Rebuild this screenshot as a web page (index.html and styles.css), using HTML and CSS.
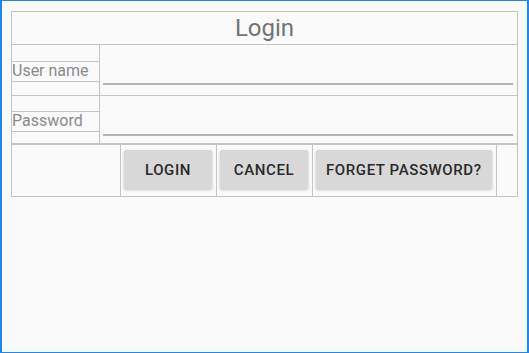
FILE: index.html
```html
<!DOCTYPE html>
<html lang="en">
<head>
  <meta charset="UTF-8">
  <meta name="viewport" content="width=device-width, initial-scale=1.0">
  <title>Login</title>
  <link rel="stylesheet" href="styles.css">
</head>
<body>
  <div class="login">
    <div class="login-title">Login</div>

    <div class="field">
      <div class="label-col">
        <div class="gap gap-top"></div>
        <div class="label">User name</div>
        <div class="gap gap-bottom"></div>
      </div>
      <div class="input-col">
        <input type="text" class="text-input">
      </div>
    </div>

    <div class="field field-last">
      <div class="label-col">
        <div class="gap gap-top"></div>
        <div class="label">Password</div>
        <div class="gap gap-bottom"></div>
      </div>
      <div class="input-col">
        <input type="password" class="text-input">
      </div>
    </div>

    <div class="actions">
      <div class="cell cell-spacer"></div>
      <div class="cell"><button class="btn">Login</button></div>
      <div class="cell"><button class="btn">Cancel</button></div>
      <div class="cell"><button class="btn">Forget password?</button></div>
      <div class="cell cell-end"></div>
    </div>
  </div>
</body>
</html>
```

FILE: styles.css
```css
html {
  box-sizing: border-box;
  height: 100%;
}
*, *::before, *::after {
  box-sizing: inherit;
}
body {
  margin: 0;
  height: 100%;
  background: #fafafa;
  border-style: solid;
  border-color: #1a88f4;
  border-width: 1px 2px 1px 2px;
  padding: 10px 9px 0 9px;
  font-family: Roboto, "Liberation Sans", sans-serif;
}
.login {
  border: 1px solid #c4c4c4;
}
.login-title {
  height: 33px;
  line-height: 32px;
  border-bottom: 1px solid #c4c4c4;
  text-align: center;
  font-size: 24px;
  color: #737373;
}
.field {
  display: flex;
  border-bottom: 1px solid #c4c4c4;
}
.field-last {
  border-bottom: 2px solid #c4c4c4;
}
.label-col {
  width: 88px;
  flex: 0 0 88px;
  border-right: 1px solid #c4c4c4;
  display: flex;
  flex-direction: column;
}
.gap {
  border-bottom: 1px solid #c4c4c4;
}
.gap-top {
  height: 17px;
}
.field-last .gap-top {
  height: 16px;
}
.gap-bottom {
  border-bottom: none;
  height: 13px;
}
.field-last .gap-bottom {
  height: 11px;
}
.label {
  height: 20px;
  line-height: 17px;
  border-bottom: 1px solid #c4c4c4;
  font-size: 16px;
  color: #8a8a8a;
  white-space: nowrap;
}
.input-col {
  flex: 1;
  padding: 0 4px 0 3px;
}
.text-input {
  display: block;
  width: 100%;
  height: 40px;
  border: none;
  border-bottom: 2px solid #b4b4b4;
  background: transparent;
  outline: none;
  font-family: inherit;
  font-size: 16px;
}
.actions {
  display: flex;
  height: 51px;
}
.cell {
  border-right: 1px solid #c4c4c4;
  padding: 5px 4px 6px 3px;
}
.cell-spacer {
  flex: 0 0 109px;
}
.cell-end {
  flex: 1;
  border-right: none;
}
.btn {
  height: 39px;
  min-width: 88px;
  padding: 0 10px;
  border: none;
  border-radius: 2px;
  background: #d7d8d7;
  box-shadow: 0 1px 3px rgba(0, 0, 0, 0.22);
  font-family: inherit;
  font-size: 15px;
  font-weight: 500;
  letter-spacing: 0.6px;
  text-transform: uppercase;
  color: #2a2a2a;
}
```
